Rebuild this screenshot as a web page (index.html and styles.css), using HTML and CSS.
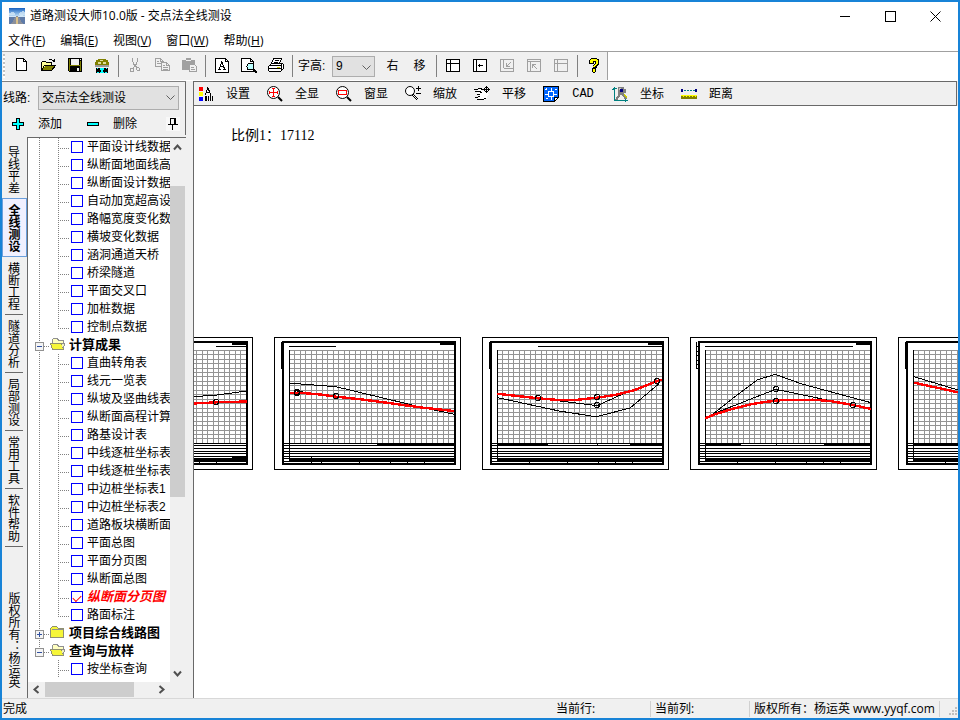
FILE: index.html
```html
<!DOCTYPE html>
<html lang="zh-CN">
<head>
<meta charset="utf-8">
<title>道路测设大师10.0版 - 交点法全线测设</title>
<link rel="stylesheet" href="styles.css">
</head>
<body>
<div class="window">
  <header class="titlebar">
    <svg class="app-icon" viewBox="0 0 16 16" aria-hidden="true">
      <defs>
        <linearGradient id="sky" x1="0" y1="0" x2="0" y2="1"><stop offset="0" stop-color="#1560c0"/><stop offset=".8" stop-color="#a9d0f2"/><stop offset="1" stop-color="#e4f0fa"/></linearGradient>
      </defs>
      <path fill="url(#sky)" d="M0 0h16v9H0z"/>
      <path fill="#dcecf8" d="M0 5l4-1 3 2-3 1H0zM10 5l4-2 2 1v3l-5 1z" opacity=".7"/>
      <path fill="#5f7ba8" d="M0 9h16v7H0z"/>
      <path fill="#8a8f9a" d="M7 8h2l5 8H2z"/>
      <path fill="#d9c08a" d="M7.500 9h1l.5 7H7z"/>
    </svg>
    <h1 class="title">道路测设大师10.0版 - 交点法全线测设</h1>
    <button class="win-btn" aria-label="最小化"><svg viewBox="0 0 11 11"><path d="M0 5.500h10"/></svg></button>
    <button class="win-btn" aria-label="最大化"><svg viewBox="0 0 11 11"><path d="M.5.5h10v10H.5z"/></svg></button>
    <button class="win-btn" aria-label="关闭"><svg class="smooth" viewBox="0 0 11 11"><path d="M.5.5l10 10M10.500.5l-10 10"/></svg></button>
  </header>

  <nav class="menubar">
    <button>文件(<u>F</u>)</button>
    <button>编辑(<u>E</u>)</button>
    <button>视图(<u>V</u>)</button>
    <button>窗口(<u>W</u>)</button>
    <button>帮助(<u>H</u>)</button>
  </nav>

  <div class="toolrow">
    <div class="toolbar">
      <span class="grip"></span>
      <button class="tool" aria-label="新建"><svg viewBox="0 0 16 16"><path class="l w" d="M3.500.5h7l3 3v9h-10z"/><path class="l" d="M10.500.5v3h3"/></svg></button>
      <button class="tool" aria-label="打开"><svg viewBox="0 0 16 16"><path fill="#ff9" d="M2 4h4l1 1h5v3H5l-3 4z"/><path class="l" d="M1.500 12V4.500l1-1h3l1 1h5V7M9 1.500h3M12 2.500h2M14.500 1v3M12.500 3.500h2"/><path fill="#808000" d="M5 8h10l-3 4H2z"/><path class="l" d="M4.500 7.500h11l-4 5h-10z"/></svg></button>
      <button class="tool" aria-label="保存"><svg viewBox="0 0 16 16"><path fill="#000" d="M1 0h14v14H2l-1-1z"/><path fill="#808000" d="M2 1h1v12H2zM13 3h1v10h-1zM3 7h10v1H3z"/><path fill="#efefef" d="M4 1h8v6H4zM10 10h2v3h-2zM13 1h1v1h-1z"/></svg></button>
      <button class="tool" aria-label="测设"><svg viewBox="0 0 16 16"><path fill="#808000" d="M4 1h8v1h2v2h1v3H1V4h1V2h2z"/><path fill="#dede9c" d="M6 2h3v1H6zM4 4h3v2H4zM9 4h3v2H9z"/><path fill="#9a9a9a" d="M1 7h14v2H1z"/><path fill="#000" d="M2 10h12v5H2z"/><path fill="#0ff" d="M3 10h1v1H3zM6 10h4v2H9v2h1v1H6v-1h1v-2H6zM12 10h1v1h-1zM3 14h2v1H3zM11 14h2v1h-2z"/></svg></button>
      <span class="sep"></span>
      <button class="tool" aria-label="剪切" disabled><svg viewBox="0 0 16 16"><path class="g" d="M5.500 0v4M6.500 4v3M10.500 0v4M9.500 4v3M7.500 6v3M8.500 6v3M6.500 9v2M9.500 8v2M3.500 10.500h2l1 1v2h-3zM9.500 9.500h2l1 1v2h-2l-1-1z"/></svg></button>
      <button class="tool" aria-label="复制" disabled><svg viewBox="0 0 16 16"><path class="g" d="M1.500.5h5l3 3v5h-8zM6.500.5v3h3M3 3.500h2M3 5.500h5"/><path class="g b" d="M7.500 4.500h5l3 3v5h-8z"/><path class="g" d="M12.500 4.500v3h3M9 7.500h2M9 9.500h5M9 11.500h5"/></svg></button>
      <button class="tool" aria-label="粘贴" disabled><svg viewBox="0 0 16 16"><path fill="#a0a0a0" d="M1 2h4V0h5v2h4v10H1z"/><path fill="#efefef" d="M5 2h5v1H5z"/><path class="g b" d="M8.500 6.500h5l2 2v5h-7z"/><path class="g" d="M10 9.500h3M10 11.500h4"/></svg></button>
      <span class="sep"></span>
      <button class="tool" aria-label="字体"><svg viewBox="0 0 16 16"><path class="l w" d="M1.500.5h10l3 3v11h-13z"/><path class="l" d="M11.500.5v3h3M4 11.500h3M9 11.500h3M5.500 11V9M6.500 9V6M7.500 6V3M8.500 4v3M9.500 7v3M10.500 9v2M6 8.500h4"/></svg></button>
      <button class="tool" aria-label="打印预览"><svg viewBox="0 0 16 16"><path class="l w" d="M.5.5h9l3 3v10H.5z"/><path class="l" d="M9.500.5v3h3"/><circle class="l lens" cx="9.500" cy="8.500" r="3.500"/><path class="l" stroke-width="2" d="M12 11l4 4"/></svg></button>
      <button class="tool" aria-label="打印"><svg viewBox="0 0 16 16"><path class="l w" d="M5.500.5h8l-2 5h-8z"/><path class="l" d="M7 2.500h4M6 4.500h4"/><path class="l w" d="M3.500 5.500h11l1 1v4l-3 3h-11l-1-1v-4z"/><path fill="#000" d="M1 7h12v1H1zM1 10h12v1H1zM13 6h1v7h-1z"/><path fill="#cc0" d="M9 9h3v1H9z"/></svg></button>
      <span class="sep"></span>
      <label class="field-label" for="font-height">字高:</label>
      <span class="combo combo-small"><select id="font-height"><option>9</option></select><svg viewBox="0 0 9 6"><path d="M.5.5l4 4 4-4"/></svg></span>
      <button class="tool">右</button>
      <button class="tool">移</button>
      <span class="sep"></span>
      <button class="tool" aria-label="布局"><svg viewBox="0 0 16 16"><path class="l w" d="M1.500 1.500h13v12h-13z"/><path class="l" d="M5.500 2v11M6 5.500h8M2 5.500h3"/></svg></button>
      <button class="tool" aria-label="左移"><svg viewBox="0 0 16 16"><path class="l w" d="M1.500 1.500h13v12h-13z"/><path class="l" d="M4.500 2v11M6 7.500h5M7.500 6v3"/></svg></button>
      <button class="tool" aria-label="左下" disabled><svg viewBox="0 0 16 16"><path class="g" d="M1.500 1.500h13v12h-13zM4.500 2v8M5 10.500h9M7.500 5v4M8 8.500h3M8 8l4-4"/></svg></button>
      <button class="tool" aria-label="左上" disabled><svg viewBox="0 0 16 16"><path class="g" d="M1.500 1.500h13v12h-13zM4.500 4v9M2 3.500h12M6.500 6v4M7 6.500h3M7 7l4 4"/></svg></button>
      <button class="tool" aria-label="表头" disabled><svg viewBox="0 0 16 16"><path class="g" d="M1.500 1.500h13v12h-13zM4.500 2v11M2 5.500h12"/></svg></button>
      <span class="sep"></span>
      <button class="tool" aria-label="帮助"><svg viewBox="0 0 16 16"><path fill="#000" d="M5 0h6v1h2v6h-1v1h-1v2h-1v4H9v1H7v-1H6v-4h1V7h1V6h1V4H8v2H3V2h1V1h1z"/><path fill="#ff0" d="M5 1h6v1h1v4h-1v1h-1v1H9v1H7V8h1V7h1V6h1V3H7v2H4V2h1zM7 11h2v3H7z"/></svg></button>
    </div>
  </div>

  <div class="body">
    <aside class="sidebar">
      <div class="side-head">
        <div class="side-row">
          <label class="field-label" for="route">线路:</label>
          <span class="combo combo-route"><select id="route"><option>交点法全线测设</option></select><svg viewBox="0 0 9 6"><path d="M.5.5l4 4 4-4"/></svg></span>
        </div>
        <div class="side-row actions">
          <button class="action"><svg viewBox="0 0 14 14"><path fill="#0ff" stroke="#000" d="M5.500 1.500h3v4h4v3h-4v4h-3v-4h-4v-3h4z"/></svg>添加</button>
          <button class="action"><svg viewBox="0 0 14 14"><path fill="#0ff" stroke="#000" d="M1.500 5.500h11v3h-11z"/></svg>删除</button>
          <button class="pin" aria-label="固定"><svg viewBox="0 0 12 12"><path fill="#000" d="M3 0h6v1H3zM3 0h1v6H3zM7 0h2v6H7zM1 6h10v1H1zM5 7h1v5H5z"/></svg></button>
        </div>
      </div>
      <div class="side-main">
        <div class="tabs">
          <button class="tab">导线平差</button>
          <button class="tab selected">全线测设</button>
          <button class="tab">横断工程</button>
          <button class="tab">隧道分析</button>
          <button class="tab">局部测设</button>
          <button class="tab">常用工具</button>
          <button class="tab">软件帮助</button>
          <span class="owner">版权所有：杨运英</span>
        </div>
        <div class="tree-box">
          <div class="tree-view">
            <ul class="tree">
              <li class="leaf"><label><input type="checkbox">平面设计线数据</label></li>
              <li class="leaf"><label><input type="checkbox">纵断面地面线高</label></li>
              <li class="leaf"><label><input type="checkbox">纵断面设计数据</label></li>
              <li class="leaf"><label><input type="checkbox">自动加宽超高设</label></li>
              <li class="leaf"><label><input type="checkbox">路幅宽度变化数</label></li>
              <li class="leaf"><label><input type="checkbox">横坡变化数据</label></li>
              <li class="leaf"><label><input type="checkbox">涵洞通道天桥</label></li>
              <li class="leaf"><label><input type="checkbox">桥梁隧道</label></li>
              <li class="leaf"><label><input type="checkbox">平面交叉口</label></li>
              <li class="leaf"><label><input type="checkbox">加桩数据</label></li>
              <li class="leaf last"><label><input type="checkbox">控制点数据</label></li>
              <li class="group"><button class="toggle" aria-label="折叠"><svg viewBox="0 0 9 9"><path class="box" d="M.5.5h8v8h-8z"/><path class="sign" d="M2 4.500h5"/></svg></button><svg class="folder" viewBox="0 0 16 16"><path class="paper" d="M2.500 12.500v-10l1-1h4l1 2h5v3"/><path class="gold" d="M2.500 12.500l-2-6h11l2 6z"/><path class="edge" d="M13.500 12.500l1-6h-3"/></svg>计算成果</li>
              <li class="leaf"><label><input type="checkbox">直曲转角表</label></li>
              <li class="leaf"><label><input type="checkbox">线元一览表</label></li>
              <li class="leaf"><label><input type="checkbox">纵坡及竖曲线表</label></li>
              <li class="leaf"><label><input type="checkbox">纵断面高程计算</label></li>
              <li class="leaf"><label><input type="checkbox">路基设计表</label></li>
              <li class="leaf"><label><input type="checkbox">中线逐桩坐标表</label></li>
              <li class="leaf"><label><input type="checkbox">中线逐桩坐标表</label></li>
              <li class="leaf"><label><input type="checkbox">中边桩坐标表1</label></li>
              <li class="leaf"><label><input type="checkbox">中边桩坐标表2</label></li>
              <li class="leaf"><label><input type="checkbox">道路板块横断面</label></li>
              <li class="leaf"><label><input type="checkbox">平面总图</label></li>
              <li class="leaf"><label><input type="checkbox">平面分页图</label></li>
              <li class="leaf"><label><input type="checkbox">纵断面总图</label></li>
              <li class="leaf active"><label><input type="checkbox" checked>纵断面分页图</label></li>
              <li class="leaf last"><label><input type="checkbox">路面标注</label></li>
              <li class="group"><button class="toggle" aria-label="展开"><svg viewBox="0 0 9 9"><path class="box" d="M.5.5h8v8h-8z"/><path class="sign" d="M2 4.500h5M4.500 2v5"/></svg></button><svg class="folder" viewBox="0 0 16 16"><path class="gold" d="M.5 12.500v-9l2-2h4l2 2h5v9z"/><path class="paper" d="M1.500 4.500h11"/></svg>项目综合线路图</li>
              <li class="group end"><button class="toggle" aria-label="折叠"><svg viewBox="0 0 9 9"><path class="box" d="M.5.5h8v8h-8z"/><path class="sign" d="M2 4.500h5"/></svg></button><svg class="folder" viewBox="0 0 16 16"><path class="paper" d="M2.500 12.500v-10l1-1h4l1 2h5v3"/><path class="gold" d="M2.500 12.500l-2-6h11l2 6z"/><path class="edge" d="M13.500 12.500l1-6h-3"/></svg>查询与放样</li>
              <li class="leaf tail"><label><input type="checkbox">按坐标查询</label></li>
            </ul>
            <div class="vscroll">
              <button aria-label="向上"><svg viewBox="0 0 9 9"><path d="M1 6.500l3.500-4 3.500 4"/></svg></button>
              <span class="vtrack"><span class="vthumb"></span></span>
              <button aria-label="向下"><svg viewBox="0 0 9 9"><path d="M1 2.500l3.500 4 3.500-4"/></svg></button>
            </div>
          </div>
          <div class="hscroll">
            <button aria-label="向左"><svg viewBox="0 0 9 9"><path d="M6.500 1l-4 3.500 4 3.500"/></svg></button>
            <span class="htrack"><span class="hthumb"></span></span>
            <button aria-label="向右"><svg viewBox="0 0 9 9"><path d="M2.500 1l4 3.500-4 3.500"/></svg></button>
          </div>
        </div>
      </div>
    </aside>

    <main class="view">
      <div class="viewbar">
        <button class="cmd"><svg viewBox="0 0 16 16"><path fill="red" d="M1 1h4v4H1z"/><path fill="#ff0" d="M1 6h4v4H1z"/><path fill="#00f" d="M1 11h4v4H1z"/><path class="l" d="M7.500 9V7M8.500 7V4M9.500 4V1M10.500 2v3M11.500 4v3M12.500 7v3M8 6.500h4"/><path fill="#000" d="M7 10h2v5H7zM10 10h1v5h-1zM12 10h1v5h-1zM14 10h1v5h-1z"/></svg><span>设置</span></button>
        <button class="cmd"><svg viewBox="0 0 16 16"><circle class="l w smooth" cx="6.500" cy="6.500" r="6"/><path stroke="red" d="M6.500 2v9M2 6.500h9M5 2.500h3M5 10.500h3M2.500 5v3M10.500 5v3"/><path class="l smooth" stroke-width="2" d="M11 11l4 4"/></svg><span>全显</span></button>
        <button class="cmd"><svg viewBox="0 0 16 16"><circle class="l w smooth" cx="6.500" cy="6.500" r="6"/><path fill="#fff" stroke="red" d="M2.500 4.500h8v4h-8z"/><path class="l smooth" stroke-width="2" d="M11 11l4 4"/></svg><span>窗显</span></button>
        <button class="cmd"><svg viewBox="0 0 16 16"><circle class="l w smooth" cx="5" cy="5" r="4.500"/><path class="l" d="M7 9l5 5M8 8l5 5M13.500 0v5M11 2.500h5M11 7.500h5"/></svg><span>缩放</span></button>
        <button class="cmd"><svg viewBox="0 0 16 16"><path fill="#fff" d="M2 5l4-2 5 3 4 2-4 6H6z"/><path class="l" d="M0 3.500h4M4 2.500h4M7 3.500h2M1 5.500h4M5.500 5l2 2M3 8.500h3M1 11.500h3M4 10.500h2M3 13.500h7M10 12.500h2M12.500 0v7M9 3.500h7M11 1.500h3M11 5.500h3M10.500 2v3M14.500 2v3"/></svg><span>平移</span></button>
        <button class="cmd"><svg viewBox="0 0 16 16"><path fill="#06f" stroke="#000" d="M.5.5h15v11l-4 4H.5z"/><path stroke="#fff" fill="none" d="M5.500 5.500h5v5h-5zM8 2v3M8 11v3M2 8h3M11 8h3M2 3.500h2M3.500 2v2M12 3.500h2M3 12.500h2"/><path fill="#fff" stroke="#000" d="M11.500 15.500v-4h4z"/></svg><span class="latin">CAD</span></button>
        <button class="cmd"><svg viewBox="0 0 16 16"><path stroke="#008080" fill="none" d="M2.500 1v14M0 3.500h2M1 2.500h4M2 14.500h14M13.500 12v4"/><path fill="#808080" d="M6 1h6v7H6zM12 3h2v4h-2z"/><path fill="#c6c6c6" d="M7 2h2v2H7z"/><path fill="#000080" d="M8 3h3v3H8z"/><path stroke="#808080" stroke-width="2" d="M8 8l-4 6M10 8l4 5"/><path stroke="#cc0" d="M12 8l3 4"/></svg><span>坐标</span></button>
        <button class="cmd"><svg viewBox="0 0 16 16"><path fill="#000080" d="M0 3h2v3H0zM14 3h2v3h-2z"/><path fill="#008080" d="M3 4h2v1H3zM6 4h2v1H6zM9 4h2v1H9zM12 4h2v1h-2z"/><path fill="#808000" d="M0 9h16v4H0z"/><path fill="#ff0" d="M0 9h16v1H0zM2 10h1v1H2zM5 10h1v1H5zM8 10h1v1H8zM11 10h1v1h-1zM14 10h1v1h-1z"/></svg><span>距离</span></button>
      </div>
      <div class="canvas">
        <p class="scale">比例1：17112</p>
        <svg class="sheets" aria-label="纵断面分页图">
          <defs>
            <g id="sheet">
              <path fill="#fff" stroke="#000" d="M.5.5h186v132H.5z"/>
              <g stroke="#949494" fill="none">
                <path d="M15 13.500h165M15 17.500h165M15 22.500h165M15 26.500h165M15 31.500h165M15 35.500h165M15 39.500h165M15 44.500h165M15 48.500h165M15 53.500h165M15 57.500h165M15 62.500h165M15 66.500h165M15 71.500h165M15 75.500h165M15 79.500h165M15 84.500h165M15 88.500h165M15 93.500h165M15 97.500h165M15 101.500h165"/>
                <path d="M20.500 13v93M26.500 13v93M31.500 13v93M37.500 13v93M42.500 13v93M48.500 13v93M53.500 13v93M59.500 13v93M64.500 13v93M70.500 13v93M75.500 13v93M81.500 13v93M86.500 13v93M92.500 13v93M97.500 13v93M103.500 13v93M108.500 13v93M114.500 13v93M119.500 13v93M125.500 13v93M130.500 13v93M136.500 13v93M141.500 13v93M147.500 13v93M152.500 13v93M158.500 13v93M163.500 13v93M169.500 13v93M174.500 13v93"/>
              </g>
              <path fill="#000" d="M8 4h174v2H8zM8 4h2v124H8zM180 4h2v124h-2zM8 126h174v2H8zM166 6h15v2h-15zM10 106h171v1H10zM10 108h171v1H10zM10 111h171v1H10zM10 114h171v1H10zM10 116h171v1H10zM10 119h171v1H10zM15 121h166v4H15zM10 121h5v1h-5zM10 124h5v1h-5zM15 13h1v112h-1zM47 125h1v1h-1zM85 125h1v1h-1zM116 125h1v1h-1zM133 125h1v1h-1zM150 125h1v1h-1z"/>
            </g>
            <path id="side" fill="#000" d="M7 5h3v27H7z"/>
            <g id="node" fill="none" stroke="#000"><circle r="2.500"/></g>
          </defs>
          <svg x="-128" class="page">
            <use href="#sheet"/>
            <path fill="#000" d="M150 9h31v1h-31zM166 119h14v3h-14z"/>
            <path class="ground" d="M128 59.700L151 58l30-4"/>
            <path class="design" d="M128 66.500l22-1.200 31-.8"/>
            <use href="#node" x="150" y="65"/>
          </svg>
          <svg x="80" class="page">
            <use href="#sheet"/><use href="#side"/>
            <path fill="#000" d="M15 9h47v1H15zM103 106h78v3h-78zM37 119h1v8h-1z"/>
            <path class="ground" d="M16 46.300l7 .4 39 3 79 19 39 8.600M23 54.300l12 1.400"/>
            <path class="design" d="M16 56h13l19 1.700 14 2 25 2.600 30 4 32 4.400 31 3.300"/>
            <use href="#node" x="23" y="55"/><use href="#node" x="23" y="56"/><use href="#node" x="62" y="59"/>
          </svg>
          <svg x="288" class="page">
            <use href="#sheet"/><use href="#side"/>
            <path fill="#000" d="M56 9h125v1H56zM15 106h51v3H15zM148 106h33v3h-33zM115 106h1v3h-1z"/>
            <path class="ground" d="M16 60.700L77 74l37 5.700 7-1.700 27-7 29-24.300M78 64l37 4.700 25-11.400 13-5"/>
            <path class="design" d="M15 56.700l41 4.600L77 63h16l22-2.300 18-2.700 20-5 23-9.300 4-1"/>
            <use href="#node" x="56" y="61"/><use href="#node" x="115" y="60"/><use href="#node" x="115" y="68"/><use href="#node" x="175" y="44"/>
          </svg>
          <svg x="496" class="page">
            <use href="#sheet"/>
            <path fill="#000" d="M15 9h148v1H15zM15 106h36v3H15zM134 106h46v3h-46zM86 106h1v3h-1z"/>
            <path class="ground" d="M6.500 5v26.500H8M7 9.500h2M7 14.500h2M7 18.500h2M7 23.500h2M7 27.500h2"/>
            <path class="ground" d="M16 81.300l7-4.300 22-17.300L67 43l18-5.700 28 10 68 18.400M23 77l37-14.700 26-10L137 63"/>
            <path class="design" d="M15 81.300l10-4 18-5.600L62 67l15-2.300L93 63l30-.3 17 1.300 23 4 18 4"/>
            <use href="#node" x="86" y="52"/><use href="#node" x="86" y="64"/><use href="#node" x="163" y="68"/>
          </svg>
          <svg x="704" class="page">
            <use href="#sheet"/><use href="#side"/>
            <path fill="#000" d="M15 106h60v3H15z"/>
            <path class="ground" d="M16 39.700L60 53l60 18"/>
            <path class="design" d="M16 45.700l44 9.600 60 13"/>
          </svg>
        </svg>
      </div>
    </main>
  </div>

  <footer class="statusbar">
    <span class="status-main">完成</span>
    <span class="status-cell">当前行:</span>
    <span class="status-cell">当前列:</span>
    <span class="status-cell owner-cell">版权所有：杨运英 www.yyqf.com</span>
    <svg class="size-grip" viewBox="0 0 10 10" aria-hidden="true"><path fill="#bfbfbf" d="M7 0h2v2H7zM4 3h2v2H4zM7 3h2v2H7zM1 6h2v2H1zM4 6h2v2H4zM7 6h2v2H7z"/></svg>
  </footer>
</div>
</body>
</html>
```
FILE: styles.css
```css
* { box-sizing: border-box; }

body {
  margin: 0;
  font: 12px/16px "Liberation Sans", "Noto Sans CJK SC", sans-serif;
  color: #000;
}

button {
  margin: 0;
  padding: 0;
  border: 0;
  background: none;
  font: inherit;
  color: inherit;
}

svg { display: block; flex: none; shape-rendering: crispEdges; }
.smooth { shape-rendering: auto; }
.l { stroke: #000; fill: none; }
.w { fill: #fff; }
.lens { fill: #bff; }
.g { stroke: #a0a0a0; fill: none; }
.b { fill: #f0f0f0; }

.window {
  display: flex;
  flex-direction: column;
  height: 100vh;
  border: 2px solid #1883d7;
  background: #fff;
  overflow: hidden;
}

/* Title bar and menu */
.titlebar {
  display: flex;
  align-items: center;
  flex: none;
  height: 28px;
  padding-left: 7px;
  font-family: "Open Sans", "Noto Sans CJK SC", sans-serif;
}
.app-icon { width: 16px; height: 16px; }
.title { flex: 1; margin: 0 0 0 5px; font-size: 12px; font-weight: 400; }
.win-btn { display: grid; place-items: center; width: 45px; height: 28px; }
.win-btn svg { width: 11px; height: 11px; fill: none; stroke: #000; }

.menubar {
  display: flex;
  gap: 15px;
  flex: none;
  height: 22px;
  padding: 1px 0 0 6px;
  border-bottom: 1px solid #a0a0a0;
  font-family: "Open Sans", "Noto Sans CJK SC", sans-serif;
}

/* Main toolbar */
.toolrow { flex: none; height: 29px; background: #fff; display: flex; }
.toolbar {
  display: flex;
  align-items: center;
  height: 28px;
  border-right: 1px solid #a0a0a0;
  background: #f0f0f0;
}
.grip {
  width: 2px;
  height: 24px;
  margin: 0 2px 0 1px;
  background: repeating-linear-gradient(#c0c0c0 0 2px, #fff 2px 4px);
}
.tool { display: grid; place-items: center; width: 27px; height: 24px; }
.tool svg { width: 16px; height: 16px; }
.sep { width: 1px; height: 22px; margin: 0 2px 0 3px; background: #808080; }
.field-label { white-space: nowrap; }
.toolbar .field-label { width: 37px; padding-left: 3px; }

.combo { position: relative; display: block; }
.combo select {
  appearance: none;
  width: 100%;
  height: 100%;
  padding: 0 3px;
  border: 1px solid #adadad;
  border-radius: 0;
  background: #e1e1e1;
  font: inherit;
  color: #000;
}
.combo svg {
  position: absolute;
  right: 4px;
  top: 9px;
  width: 9px;
  height: 6px;
  fill: none;
  stroke: #606060;
  shape-rendering: auto;
  pointer-events: none;
}
.combo-small { width: 43px; height: 21px; margin-right: 4px; }
.combo-route { flex: 1; height: 24px; }

/* Body */
.body { display: flex; gap: 7px; flex: 1; min-height: 0; background: #f0f0f0; }

.sidebar { display: flex; flex-direction: column; width: 184px; flex: none; border-top: 1px solid #808080; }
.side-head {
  height: 53px;
  margin-bottom: 2px;
  padding: 4px 6px 0 1px;
  border-right: 1px solid #696969;
}
.side-row { display: flex; align-items: center; gap: 6px; }
.side-row .field-label { width: 29px; }
.actions { gap: 0; height: 28px; padding-left: 8px; }
.action { display: flex; align-items: center; gap: 13px; width: 75px; }
.action svg { width: 14px; height: 14px; }
.pin { margin: 0 -1px 0 auto; padding: 1px; background: #f8f8f8; }
.pin svg { width: 12px; height: 12px; }

.side-main { display: flex; flex: 1; min-height: 0; }
.tabs { display: flex; flex-direction: column; width: 25px; flex: none; padding: 5px 0 10px; }
.tab, .owner {
  writing-mode: vertical-rl;
  text-orientation: upright;
  line-height: 14px;
  text-align: center;
}
.tab {
  display: grid;
  place-items: center;
  width: 18px;
  height: 58px;
  margin-left: 3px;
  padding-right: 3px;
  border-bottom: 1px solid #696969;
}
.tab:first-child, .tab:nth-child(2) { margin-top: -1px; }
.tab:first-child { border-bottom: 0; }
.tab.selected {
  width: 25px;
  height: 59px;
  margin-left: 0;
  border: 1px solid #6a9fdc;
  background: #f0f0ff;
  font-weight: 700;
}
.owner { width: 14px; margin: auto 0 0 4px; }

.tree-box {
  display: flex;
  flex-direction: column;
  flex: 1;
  min-width: 0;
  border: solid #696969;
  border-width: 1px 0 0 1px;
}
.tree-view { display: flex; flex: 1; min-height: 0; background: #fff; }
.tree {
  flex: 1;
  min-width: 0;
  margin: 0;
  padding: 0;
  overflow: hidden;
  list-style: none;
  white-space: nowrap;
}
.tree li {
  --dots-v: repeating-linear-gradient(#808080 0 1px, transparent 1px 2px);
  --dots-h: repeating-linear-gradient(90deg, #808080 0 1px, transparent 1px 2px);
  height: 18px;
  line-height: 18px;
  background-repeat: no-repeat;
}
.leaf {
  padding-left: 43px;
  background-image: var(--dots-v), var(--dots-v), var(--dots-h);
  background-position: 11px 0, 30px 0, 30px 10px;
  background-size: 1px 18px, 1px 18px, 12px 1px;
}
.leaf.last { background-size: 1px 18px, 1px 10px, 12px 1px; }
.leaf.tail { background-size: 0 0, 1px 18px, 12px 1px; }
.leaf label { display: flex; align-items: center; gap: 4px; }
.leaf input {
  appearance: none;
  display: grid;
  place-items: center;
  flex: none;
  width: 12px;
  height: 12px;
  margin: 0;
  border: 1px solid #00f;
  background: #fff;
}
.leaf input:checked::before {
  content: "";
  width: 7px;
  height: 4px;
  border: solid red;
  border-width: 0 0 1px 1px;
  transform: rotate(-45deg);
}
.leaf.active { color: red; font-size: 13px; font-weight: 700; font-style: italic; }
.group {
  display: flex;
  align-items: center;
  padding-left: 7px;
  font-size: 13px;
  font-weight: 700;
  background-image: var(--dots-v), var(--dots-h);
  background-position: 11px 0, 16px 10px;
  background-size: 1px 18px, 6px 1px;
}
.group.end { background-size: 1px 8px, 6px 1px; }
.toggle { margin: 2px 6px 0 0; }
.toggle svg { width: 9px; height: 9px; fill: none; }
.toggle .box { fill: #f4f4f4; stroke: #919191; }
.toggle .sign { stroke: #3050a0; }
.folder { width: 16px; height: 16px; margin-right: 3px; }
.folder .paper { fill: #ffffc0; stroke: #909090; }
.folder .gold { fill: #f6f638; stroke: #909070; }
.folder .edge { fill: #f0f0c0; stroke: #909090; }

.vscroll { display: flex; flex-direction: column; width: 16px; flex: none; background: #f0f0f0; }
.vscroll button { display: grid; place-items: center; width: 15px; height: 18px; }
.vscroll svg, .hscroll svg {
  width: 9px;
  height: 9px;
  fill: none;
  stroke: #505050;
  stroke-width: 2;
  shape-rendering: auto;
}
.vtrack { flex: 1; padding-top: 30px; }
.vthumb { display: block; width: 15px; height: 65%; background: #cdcdcd; }
.hscroll { display: flex; flex: none; height: 16px; padding-right: 16px; background: #f0f0f0; }
.hscroll button { display: grid; place-items: center; width: 17px; height: 15px; }
.htrack { flex: 1; }
.hthumb { display: block; width: 82%; height: 15px; background: #cdcdcd; }

/* Drawing view */
.view { display: flex; flex-direction: column; flex: 1; min-width: 0; border-left: 1px solid #696969; }
.viewbar {
  display: flex;
  flex: none;
  height: 25px;
  margin-right: 1px;
  padding-top: 1px;
  border: solid #696969;
  border-width: 1px 1px 1px 0;
}
.cmd { display: flex; align-items: center; gap: 12px; width: 69px; padding-left: 4px; }
.cmd svg { width: 16px; height: 16px; overflow: visible; }
.cmd span { width: 24px; text-align: center; white-space: nowrap; }
.cmd .latin { font-family: "Liberation Mono", monospace; }
.canvas { flex: 1; min-height: 0; overflow: hidden; background: #fff; }
.scale {
  margin: 20px 0 191px 37px;
  font: 14px/20px "Liberation Serif", "Noto Sans CJK SC", serif;
}
.sheets { width: 100%; height: 134px; }
.page { overflow: visible; }
.ground { fill: none; stroke: #000; }
.design { fill: none; stroke: red; stroke-width: 2.4; }

/* Status bar */
.statusbar {
  display: flex;
  align-items: center;
  flex: none;
  height: 20px;
  padding-top: 1px;
  border-top: 1px solid #d8d8d8;
  background: #f0f0f0;
  font-family: "Open Sans", "Noto Sans CJK SC", sans-serif;
  white-space: nowrap;
}
.status-main { flex: 1; padding-left: 1px; }
.status-cell { width: 99px; padding-left: 4px; border-right: 1px solid #d0d0d0; }
.owner-cell { width: 190px; }
.size-grip { width: 10px; height: 10px; margin: 6px 0 0 8px; }
```
